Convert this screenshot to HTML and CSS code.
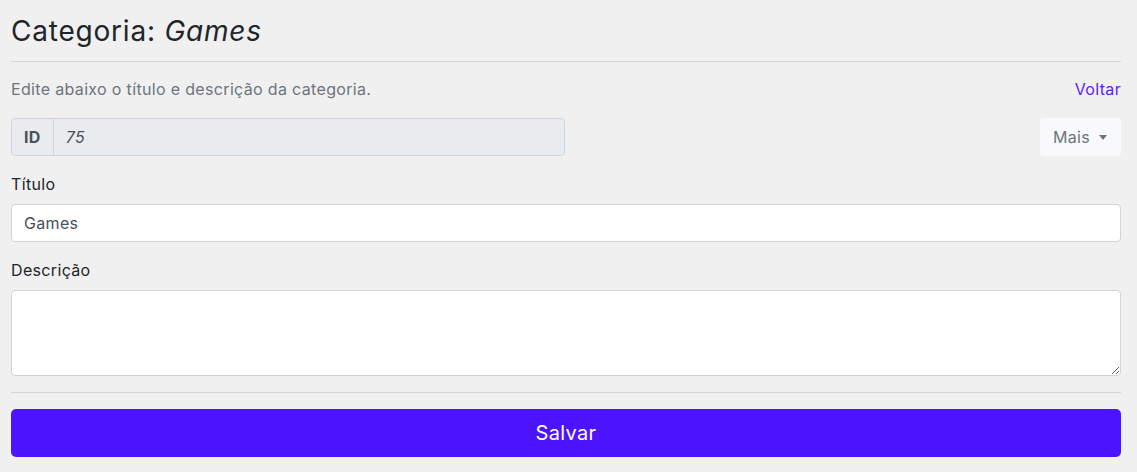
FILE: index.html
```html
<!DOCTYPE html>
<html lang="pt">
<head>
<meta charset="utf-8">
<title>Categoria: Games</title>
<link rel="stylesheet" href="styles.css">
</head>
<body>
<main class="page">
  <h3 class="title">Categoria: <em>Games</em></h3>
  <hr class="rule">
  <div class="intro">
    <p class="muted">Edite abaixo o título e descrição da categoria.</p>
    <a class="back" href="#">Voltar</a>
  </div>
  <div class="toolbar">
    <div class="input-group">
      <span class="addon">ID</span>
      <span class="id-value">75</span>
    </div>
    <button class="btn-more" type="button">Mais <span class="caret"></span></button>
  </div>
  <form class="form">
    <label class="label" for="titulo">Título</label>
    <input class="control" id="titulo" type="text" value="Games">
    <label class="label label-desc" for="descricao">Descrição</label>
    <textarea class="control area" id="descricao"></textarea>
    <hr class="rule rule-bottom">
    <button class="btn-save" type="button">Salvar</button>
  </form>
</main>
</body>
</html>
```
FILE: styles.css
```css
* { box-sizing: border-box; }
html, body { margin: 0; padding: 0; }
body {
  background: #f0f0f0;
  font-family: "Inter", "Open Sans", sans-serif;
  font-size: 16px;
  letter-spacing: 0.021em;
  color: #212529;
}
.page {
  padding: 15px 16px 0 11px;
}
.title {
  margin: 0;
  font-size: 28px;
  font-weight: 400;
  letter-spacing: 0.028em;
  line-height: 32px;
  color: #212529;
}
.title em { font-style: italic; }
.rule {
  border: 0;
  border-top: 1px solid #d6d6d6;
  margin: 14px 0 0;
}
.intro {
  display: flex;
  justify-content: space-between;
  align-items: center;
  margin-top: 15px;
  height: 24px;
}
.muted { margin: 0; color: #6c757d; }
.back { color: #5b22ff; text-decoration: none; }
.toolbar {
  display: flex;
  justify-content: space-between;
  align-items: center;
  margin-top: 17px;
}
.input-group {
  display: flex;
  width: 554px;
  height: 38px;
  border: 1px solid #ced4da;
  border-radius: 4px;
  background: #e9ecef;
}
.addon {
  display: flex;
  align-items: center;
  padding: 0 12px;
  font-weight: 700;
  color: #495057;
  border-right: 1px solid #ced4da;
}
.id-value {
  display: flex;
  align-items: center;
  padding: 0 12px;
  font-style: italic;
  color: #495057;
}
.btn-more {
  height: 38px;
  padding: 0 14px 0 13px;
  border: 0;
  border-radius: 4px;
  background: #f8f9fa;
  color: #6c757d;
  font: inherit;
  letter-spacing: inherit;
  display: flex;
  align-items: center;
  gap: 9px;
}
.caret {
  width: 0; height: 0;
  border-left: 4px solid transparent;
  border-right: 4px solid transparent;
  border-top: 5px solid #6c757d;
}
.form { display: flex; flex-direction: column; }
.label { margin-top: 16px; line-height: 24px; color: #212529; }
.control {
  margin-top: 8px;
  height: 38px;
  padding: 6px 12px;
  border: 1px solid #ced4da;
  border-radius: 4px;
  background: #fff;
  font: inherit;
  letter-spacing: inherit;
  color: #495057;
}
.label-desc { margin-top: 16px; }
.area { height: 86px; resize: vertical; }
.rule-bottom { margin-top: 16px; }
.btn-save {
  margin-top: 16px;
  height: 48px;
  border: 0;
  border-radius: 5px;
  background: #4d15ff;
  color: #fff;
  font: inherit;
  letter-spacing: inherit;
  font-size: 20px;
}
```
